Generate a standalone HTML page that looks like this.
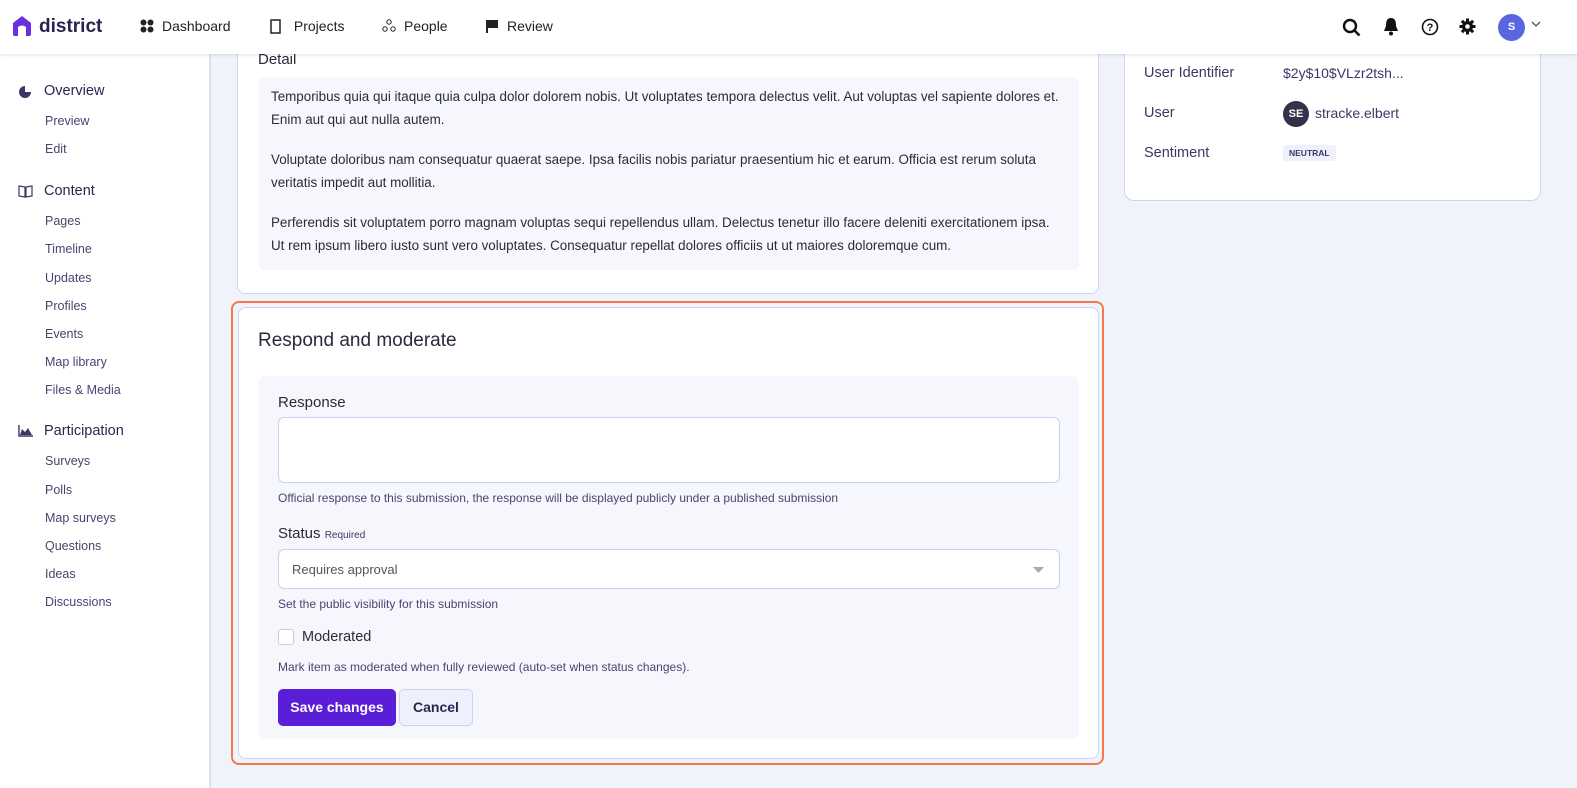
<!DOCTYPE html>
<html><head><meta charset="utf-8"><style>
*{box-sizing:border-box;margin:0;padding:0}
body{width:1577px;height:788px;overflow:hidden;background:#f1f3fb;font-family:"Liberation Sans",sans-serif;color:#2b2a3a;position:relative}
.hdr{position:absolute;left:0;top:0;width:1577px;height:54px;background:#fff;box-shadow:0 1px 3px rgba(0,0,0,.12);z-index:5}
.side{position:absolute;left:0;top:54px;width:211px;height:734px;background:#fff;border-right:2px solid #dde1f6}
.abs{position:absolute}
.nav{position:absolute;top:18px;font-size:14px;color:#222;display:flex;align-items:center;gap:8px}
.grp{position:absolute;left:18px;font-size:14.5px;color:#2a2650;display:flex;align-items:center;gap:11px}
.sub{position:absolute;left:45px;font-size:12.5px;color:#4a4470}
.card{position:absolute;background:#fff;border:1px solid #cdd3f3;border-radius:8px}
p.t{font-size:13.4px;line-height:23px;color:#2b2a3a;margin-bottom:17px}
.lbl{font-size:14.5px;color:#3d3766}
.help{font-size:12px;color:#4a4470}
</style></head><body>
<div class="hdr">
 <svg class="abs" style="left:11px;top:15px" width="22" height="22" viewBox="0 0 22 22"><path d="M2 8 L11 1 L20 8 V19 Q20 21 18 21 H4 Q2 21 2 19Z" fill="#6b2ee0"/><path d="M7 21 V12 Q11 9 15 12 V21Z" fill="#fff"/></svg>
 <div class="abs" style="left:39px;top:16px;font-size:19px;font-weight:bold;color:#2a2250">district</div>
 <div class="nav" style="left:140px"><svg width="14" height="14"><circle cx="3.5" cy="3.5" r="3" fill="#222"/><circle cx="10.5" cy="3.5" r="3" fill="#222"/><circle cx="3.5" cy="10.5" r="3" fill="#222"/><circle cx="10.5" cy="10.5" r="3" fill="#222"/></svg>Dashboard</div>
 <div class="nav" style="left:270px"><svg width="12" height="15"><rect x="1" y="1" width="9" height="13" fill="none" stroke="#222" stroke-width="1.5"/></svg>&nbsp;Projects</div>
 <div class="nav" style="left:382px"><svg width="14" height="14"><circle cx="7" cy="3" r="2.2" fill="none" stroke="#222"/><circle cx="3" cy="10" r="2.2" fill="none" stroke="#222"/><circle cx="11" cy="10" r="2.2" fill="none" stroke="#222"/></svg>People</div>
 <div class="nav" style="left:485px"><svg width="14" height="14"><rect x="1" y="1" width="2" height="13" fill="#222"/><path d="M3 1 H13 V9 H3Z" fill="#222"/></svg>Review</div>
 <svg class="abs" style="left:1342px;top:18px" width="19" height="19"><circle cx="8" cy="8" r="6" fill="none" stroke="#111" stroke-width="2.4"/><path d="M12.5 12.5 L17.5 17.5" stroke="#111" stroke-width="2.6"/></svg>
 <svg class="abs" style="left:1383px;top:17px" width="16" height="19"><path d="M8 1 C3.5 1 3 5 3 9 L1 14 H15 L13 9 C13 5 12.5 1 8 1Z" fill="#111"/><circle cx="8" cy="16.5" r="2" fill="#111"/></svg>
 <svg class="abs" style="left:1421px;top:18px" width="18" height="18"><circle cx="9" cy="9" r="7.5" fill="none" stroke="#111" stroke-width="1.6"/><text x="9" y="13" font-size="11" font-weight="bold" text-anchor="middle" font-family="Liberation Sans" fill="#111">?</text></svg>
 <svg class="abs" style="left:1459px;top:18px" width="17" height="17" viewBox="0 0 17 17"><g fill="#111"><circle cx="8.5" cy="8.5" r="5.5"/><rect x="7" y="0.5" width="3" height="16"/><rect x="0.5" y="7" width="16" height="3"/><rect x="7" y="0.5" width="3" height="16" transform="rotate(45 8.5 8.5)"/><rect x="7" y="0.5" width="3" height="16" transform="rotate(-45 8.5 8.5)"/></g><circle cx="8.5" cy="8.5" r="2.3" fill="#fff"/></svg>
 <div class="abs" style="left:1498px;top:14px;width:27px;height:27px;border-radius:50%;background:#5a66e0;color:#fff;font-size:11px;font-weight:bold;text-align:center;line-height:27px">S</div>
 <svg class="abs" style="left:1531px;top:21px" width="10" height="7"><path d="M1 1 L5 5 L9 1" fill="none" stroke="#555" stroke-width="1.3"/></svg>
</div>
<div class="side">
 <div class="grp" style="top:29px"><svg width="15" height="15"><circle cx="7" cy="8" r="6" fill="#3d3766"/><path d="M7 8 V1 A7 7 0 0 1 14 8Z" fill="#fff"/></svg>Overview</div>
 <div class="sub" style="top:60px">Preview</div><div class="sub" style="top:88px">Edit</div>
 <div class="grp" style="top:129px"><svg width="15" height="14"><path d="M1 2 L7 3 V13 L1 12Z M14 2 L8 3 V13 L14 12Z" fill="none" stroke="#3d3766" stroke-width="1.2"/></svg>Content</div>
 <div class="sub" style="top:160px">Pages</div><div class="sub" style="top:188px">Timeline</div><div class="sub" style="top:217px">Updates</div><div class="sub" style="top:245px">Profiles</div><div class="sub" style="top:273px">Events</div><div class="sub" style="top:301px">Map library</div><div class="sub" style="top:329px">Files &amp; Media</div>
 <div class="grp" style="top:369px"><svg width="15" height="12"><path d="M1 0 V11 H15" stroke="#3d3766" fill="none" stroke-width="1.4"/><path d="M2 10 L4 4 L7 7 L10 3 L14 10Z" fill="#3d3766"/></svg>Participation</div>
 <div class="sub" style="top:400px">Surveys</div><div class="sub" style="top:429px">Polls</div><div class="sub" style="top:457px">Map surveys</div><div class="sub" style="top:485px">Questions</div><div class="sub" style="top:513px">Ideas</div><div class="sub" style="top:541px">Discussions</div>
</div>
<div class="card" style="left:237px;top:30px;width:862px;height:264px;border-top:none;border-radius:0 0 8px 8px">
 <div class="abs" style="left:20px;top:21px;font-size:15px;color:#2b2a3a">Detail</div>
 <div class="abs" style="left:20px;top:47px;width:821px;height:193px;background:#f6f7fd;border-radius:6px;padding:8px 13px">
  <p class="t">Temporibus quia qui itaque quia culpa dolor dolorem nobis. Ut voluptates tempora delectus velit. Aut voluptas vel sapiente dolores et. Enim aut qui aut nulla autem.</p>
  <p class="t">Voluptate doloribus nam consequatur quaerat saepe. Ipsa facilis nobis pariatur praesentium hic et earum. Officia est rerum soluta veritatis impedit aut mollitia.</p>
  <p class="t">Perferendis sit voluptatem porro magnam voluptas sequi repellendus ullam. Delectus tenetur illo facere deleniti exercitationem ipsa. Ut rem ipsum libero iusto sunt vero voluptates. Consequatur repellat dolores officiis ut ut maiores doloremque cum.</p>
 </div>
</div>
<div class="card" style="left:1124px;top:30px;width:417px;height:171px;border-top:none;border-radius:0 0 10px 10px">
 <div class="abs lbl" style="left:19px;top:35px">User Identifier</div><div class="abs" style="left:158px;top:35px;font-size:14px;color:#3d3766">$2y$10$VLzr2tsh...</div>
 <div class="abs lbl" style="left:19px;top:75px">User</div>
 <div class="abs" style="left:158px;top:71px;width:26px;height:26px;border-radius:50%;background:#33324a;color:#fff;font-size:11px;font-weight:bold;text-align:center;line-height:26px">SE</div>
 <div class="abs" style="left:190px;top:75px;font-size:14px;color:#3d3766">stracke.elbert</div>
 <div class="abs lbl" style="left:19px;top:115px">Sentiment</div>
 <div class="abs" style="left:158px;top:115px;background:#eef0fb;border-radius:3px;padding:3px 6px;font-size:8.5px;font-weight:bold;color:#3d3766">NEUTRAL</div>
</div>
<div class="abs" style="left:231px;top:301px;width:873px;height:464px;border:2px solid #f47a4c;border-radius:8px"></div>
<div class="card" style="left:238px;top:307px;width:861px;height:452px">
 <div class="abs" style="left:19px;top:22px;font-size:19px;color:#2b2a3a">Respond and moderate</div>
 <div class="abs" style="left:19px;top:68px;width:821px;height:363px;background:#f6f7fd;border-radius:8px">
  <div class="abs" style="left:20px;top:18px;font-size:15px;color:#2b2a3a">Response</div>
  <div class="abs" style="left:20px;top:41px;width:782px;height:66px;background:#fff;border:1px solid #c8cff3;border-radius:6px"></div>
  <div class="abs help" style="left:20px;top:115px">Official response to this submission, the response will be displayed publicly under a published submission</div>
  <div class="abs" style="left:20px;top:149px;font-size:15px;color:#2b2a3a">Status <span style="font-size:10px;color:#3d3766">Required</span></div>
  <div class="abs" style="left:20px;top:173px;width:782px;height:40px;background:#fff;border:1px solid #c8cff3;border-radius:6px;padding:12px 13px;font-size:13px;color:#555"><span>Requires approval</span><svg class="abs" style="right:15px;top:17px" width="11" height="6"><path d="M0 0 H11 L5.5 6Z" fill="#aaa"/></svg></div>
  <div class="abs help" style="left:20px;top:221px">Set the public visibility for this submission</div>
  <div class="abs" style="left:20px;top:253px;width:16px;height:16px;border:1px solid #ccc;border-radius:3px;background:#fff"></div>
  <div class="abs" style="left:44px;top:253px;font-size:14.5px;color:#2b2a3a">Moderated</div>
  <div class="abs help" style="left:20px;top:284px">Mark item as moderated when fully reviewed (auto-set when status changes).</div>
  <div class="abs" style="left:20px;top:313px;width:118px;height:37px;background:#5a1ed8;border-radius:5px;color:#fff;font-size:14px;font-weight:bold;text-align:center;line-height:37px">Save changes</div>
  <div class="abs" style="left:141px;top:313px;width:74px;height:37px;background:#eef0fb;border:1px solid #cdd3f3;border-radius:5px;color:#2a2650;font-size:14px;font-weight:bold;text-align:center;line-height:35px">Cancel</div>
 </div>
</div>
</body></html>
